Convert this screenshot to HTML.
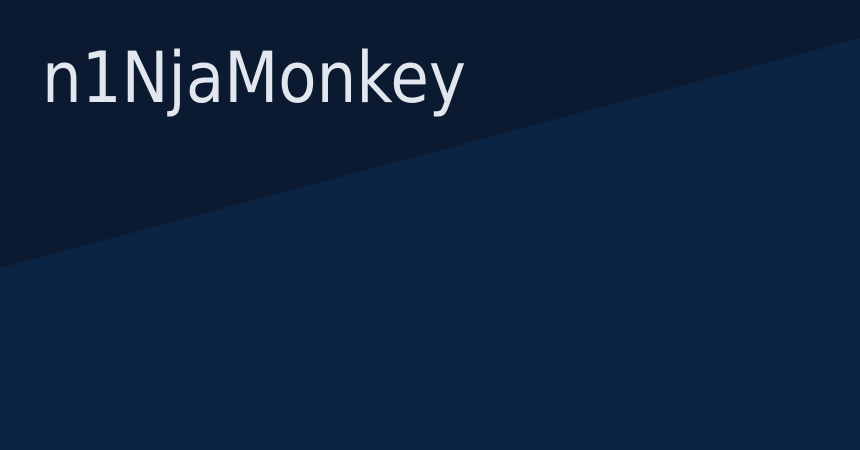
<!DOCTYPE html>
<html><head><meta charset="utf-8"><style>
html,body{margin:0;padding:0;width:860px;height:450px;overflow:hidden;background:#0b1a31}
svg{position:absolute;left:0;top:0}
.t{position:absolute;left:42px;top:43px;font-family:"DejaVu Sans",sans-serif;font-size:70px;line-height:70px;color:#e2e6ee;transform:scaleX(0.895);transform-origin:0 0;white-space:nowrap}
</style></head><body>
<svg width="860" height="450"><rect width="860" height="450" fill="#0b1a31"/><polygon points="0,268 860,38 860,450 0,450" fill="#0c2444"/></svg>
<div class="t">n1NjaMonkey</div>
</body></html>
